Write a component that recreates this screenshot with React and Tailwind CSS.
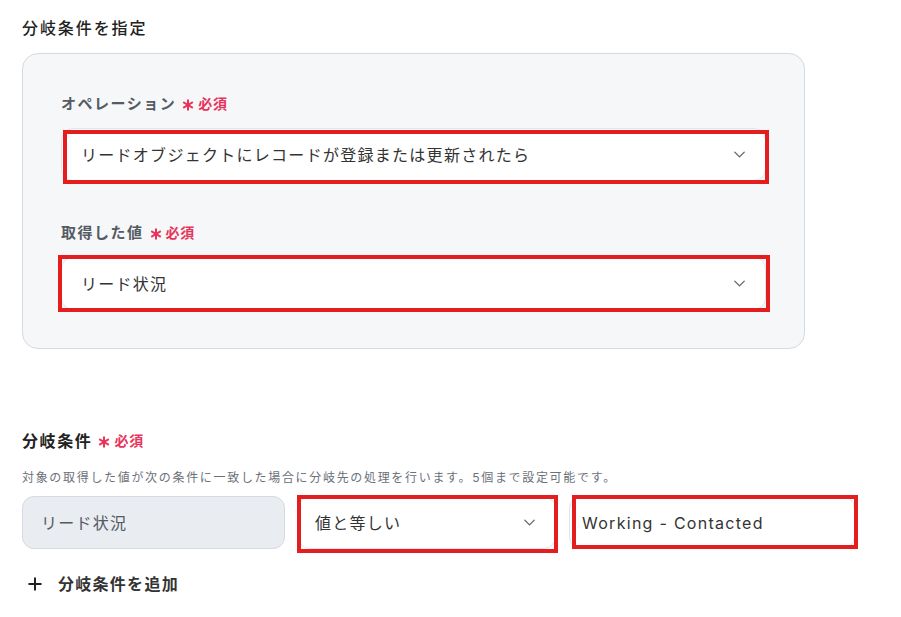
import React from "react";
import { ChevronDown, Plus } from "lucide-react";

const font = { fontFamily: '"Inter", "Noto Sans CJK JP", sans-serif' };

function Star() {
  return (
    <svg width="12" height="12" viewBox="0 0 12 12" className="mr-[4px] translate-y-[1px]">
      <g stroke="#e8345b" strokeWidth="2" strokeLinecap="butt">
        <line x1="6" y1="0.5" x2="6" y2="11.5" />
        <line x1="1.2" y1="3.2" x2="10.8" y2="8.8" />
        <line x1="1.2" y1="8.8" x2="10.8" y2="3.2" />
      </g>
    </svg>
  );
}

function Req() {
  return (
    <span className="ml-[6px] inline-flex items-center text-[#e8345b]">
      <Star />
      <span className="text-[14px] font-bold tracking-[0.06em]">必須</span>
    </span>
  );
}

function RedBox({ className }) {
  return <div className={"pointer-events-none absolute border-[4px] border-[#e41e1e] " + className} />;
}

function Select({ text, redClass }) {
  return (
    <div className="relative">
      <div className="flex h-[53px] items-center justify-between rounded-xl border border-[#e2e5ea] bg-white pl-[19px] pr-[16px]">
        <span className="text-[16px] text-[#333]">{text}</span>
        <ChevronDown size={19} strokeWidth={1.7} className="text-[#666]" />
      </div>
      <RedBox className={redClass} />
    </div>
  );
}

export default function App() {
  return (
    <div className="min-h-[617px] w-[901px] bg-white pl-[22px] pt-[16px] tracking-[0.08em]" style={font}>
      <div className="text-[16px] font-medium leading-6 tracking-[0.12em] text-[#222]">分岐条件を指定</div>
      <div className="mt-[13px] w-[783px] rounded-2xl border border-[#d5d9e0] bg-[#f6f7f9] px-[38px] pt-[38px] pb-[38px]">
        <div className="flex items-center text-[15px] font-bold leading-6 tracking-[0.1em] text-[#555b63]">
          オペレーション<Req />
        </div>
        <div className="mt-[12px] w-[705px]">
          <Select text="リードオブジェクトにレコードが登録または更新されたら" redClass="left-[2px] top-[2px] right-[-3px] bottom-[-3px]" />
        </div>
        <div className="mt-[40px] flex items-center text-[15px] font-bold leading-6 tracking-[0.1em] text-[#555b63]">
          取得した値<Req />
        </div>
        <div className="mt-[12px] w-[705px]">
          <Select text="リード状況" redClass="left-[-3px] top-[-2px] right-[-4px] bottom-[-2px]" />
        </div>
      </div>

      <div className="mt-[80px] flex items-center text-[16px] font-bold leading-6 tracking-[0.1em] text-[#222]">
        分岐条件<Req />
      </div>
      <div className="mt-[17px] text-[12px] leading-4 tracking-[0.14em] text-[#6b7079]">
        対象の取得した値が次の条件に一致した場合に分岐先の処理を行います。5個まで設定可能です。
      </div>
      <div className="mt-[10px] flex items-center">
        <div className="flex h-[53px] w-[263px] items-center rounded-xl border border-[#d5d9e0] bg-[#e9ecf1] pl-[18px] text-[16px] text-[#555b63]">
          リード状況
        </div>
        <div className="relative ml-[13px] w-[258px]">
          <div className="flex h-[53px] items-center justify-between rounded-xl border border-[#e2e5ea] bg-white pl-[16px] pr-[16px]">
            <span className="text-[16px] text-[#333]">値と等しい</span>
            <ChevronDown size={19} strokeWidth={1.7} className="text-[#666]" />
          </div>
          <RedBox className="left-[-1px] top-[-1px] right-[-2px] bottom-[-4px]" />
        </div>
        <div className="relative ml-[13px] w-[286px]">
          <div className="flex h-[53px] items-center rounded-xl border border-[#e2e5ea] bg-white pl-[12px]">
            <span className="text-[16px] text-[#333]">Working - Contacted</span>
          </div>
          <RedBox className="left-[3px] top-[-1px] right-[-3px] bottom-[0px]" />
        </div>
      </div>
      <div className="mt-[23px] flex items-center pl-[3px] text-[16px] font-bold leading-6 text-[#333]">
        <Plus size={20} strokeWidth={2.4} className="text-[#222]" />
        <span className="ml-[13px]">分岐条件を追加</span>
      </div>
    </div>
  );
}
